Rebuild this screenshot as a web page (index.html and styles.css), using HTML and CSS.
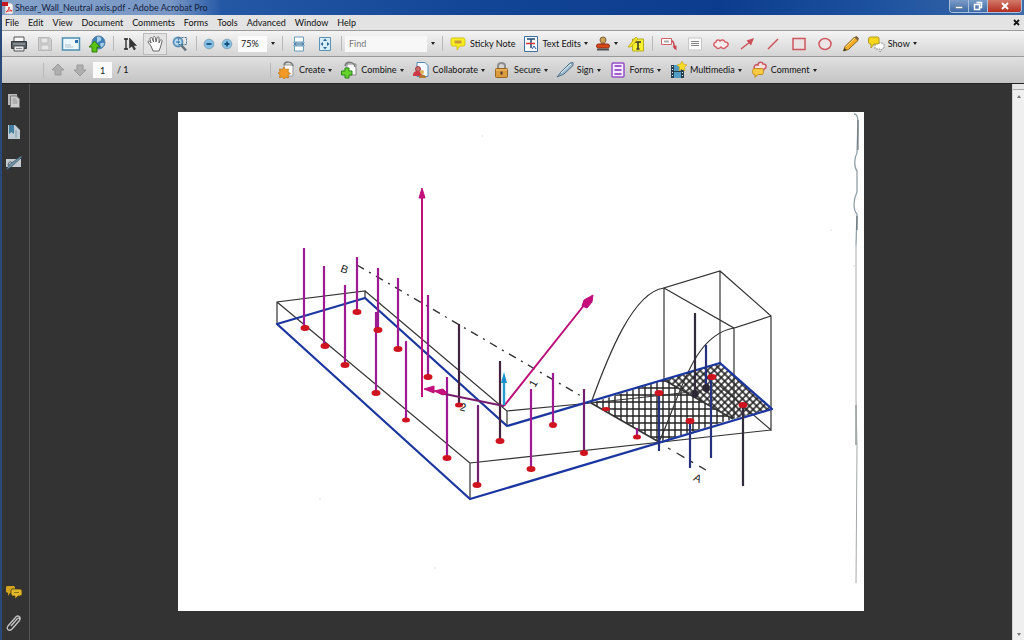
FILE: index.html
```html
<!DOCTYPE html>
<html lang="en">
<head>
  <meta charset="UTF-8">
  <meta name="viewport" content="width=device-width, initial-scale=1.0">
  <title>Shear_Wall_Neutral axis.pdf - Adobe Acrobat Pro</title>
  <link rel="stylesheet" href="styles.css">
</head>
<body>
  <header class="titlebar">
    <svg class="app-icon" width="12" height="12" viewBox="0 0 12 12"><path d="M3 1h6l2 2v9H3z" fill="#f6f3f3" stroke="#999" stroke-width=".6"/><path d="M0 0h6v4H0z" fill="#c8141c"/><path d="M4 10c2-1 3-3 3-5 0 2 1 3 3 4-2-.5-4 0-6 1z" fill="none" stroke="#d33"/></svg>
    <h1>Shear_Wall_Neutral axis.pdf - Adobe Acrobat Pro</h1>
    <div class="window-buttons">
      <button aria-label="Minimize"><svg width="10" height="10" viewBox="0 0 10 10"><path d="M1.500 5.500h7v2h-7z" fill="#fff" stroke="#456" stroke-width=".4"/></svg></button>
      <button aria-label="Restore"><svg width="10" height="10" viewBox="0 0 10 10"><path d="M3.500 1.500h5v5h-2M1.500 3.500h5v5h-5z" fill="none" stroke="#fff" stroke-width="1.500"/></svg></button>
      <button class="close" aria-label="Close"><svg width="10" height="10" viewBox="0 0 10 10"><path d="M2 2l6 6M8 2l-6 6" stroke="#fff" stroke-width="2"/></svg></button>
    </div>
  </header>

  <nav class="menubar">
    <a href="#">File</a>
    <a href="#">Edit</a>
    <a href="#">View</a>
    <a href="#">Document</a>
    <a href="#">Comments</a>
    <a href="#">Forms</a>
    <a href="#">Tools</a>
    <a href="#">Advanced</a>
    <a href="#">Window</a>
    <a href="#">Help</a>
    <button class="close-doc" aria-label="Close document"><svg width="7" height="7" viewBox="0 0 7 7"><path d="M1 1l5 5M6 1L1 6" stroke="#111" stroke-width="1.800"/></svg></button>
  </nav>

  <div class="toolbar main-tools">
    <button class="tool" aria-label="Print"><svg width="18" height="18" viewBox="0 0 18 18"><path d="M4 2h10v5H4z" fill="#f8f8f8" stroke="#555"/><path d="M1.500 6.500h15v7h-15z" fill="#5b6266" stroke="#33393c"/><path d="M3 9h12" stroke="#aeb6ba"/><path d="M4 11h10v5H4z" fill="#e8ecee" stroke="#555"/><path d="M6 13.500h6" stroke="#888"/></svg></button>
    <button class="tool" aria-label="Save" disabled><svg width="16" height="16" viewBox="0 0 16 16"><path d="M1.500 1.500h11l2 2v11h-13z" fill="#cfcfcf" stroke="#b5b5b5"/><path d="M4 2h7v5H4zM4 9h8v5H4z" fill="#e6e6e6" stroke="#bbb"/></svg></button>
    <button class="tool" aria-label="Email"><svg width="20" height="16" viewBox="0 0 20 16"><path d="M1.500 2h17v12h-17z" fill="#eef7fb" stroke="#4c8fb4" stroke-width="1.500"/><path d="M4 9h6M4 11h8" stroke="#a9c0cd"/><path d="M14 4h3v3h-3z" fill="#2a6fa8"/></svg></button>
    <button class="tool" aria-label="Upload"><svg width="18" height="18" viewBox="0 0 18 18"><circle cx="10.500" cy="7.500" r="6.500" fill="#3c7fb8" stroke="#5a83a3"/><path d="M9 2c3-1 5 1 4 3s-3 1-4 3M12 9c2-2 4-1 4 0s-2 4-3 3z" fill="#a7cfe5"/><path d="M6.500 6L12 12H9v5H4v-5H1z" fill="#5cc414" stroke="#2c7d0c"/></svg></button>
    <span class="sep"></span>
    <button class="tool" aria-label="Select"><svg width="16" height="16" viewBox="0 0 16 16"><path d="M2 3h4M4 3v10M2 13h4" stroke="#222" stroke-width="1.300" fill="none"/><path d="M7.500 2v10l2.500-2 2 4 1.500-1-2-3.500h3z" fill="#333" stroke="#222" stroke-width=".5"/></svg></button>
    <button class="tool active" aria-label="Hand"><svg width="18" height="18" viewBox="0 0 18 18"><path d="M5 11L2 7c0-2 2-1 3 1L4 4c0-2 2-2 2.500 0l1 3-.5-4c.3-2 2-2 2.500 0l.5 4L11 3c.5-2 2.500-1 2 .5V8l1-2.500c1-1.500 2.500-.5 2 1L14.500 12 13 16H7z" fill="#fff" stroke="#666"/></svg></button>
    <button class="tool" aria-label="Marquee zoom"><svg width="18" height="18" viewBox="0 0 18 18"><circle cx="7" cy="7" r="4.500" fill="#b5dcf2" stroke="#5b8fb3" stroke-width="1.800"/><path d="M10.500 10.500L15 15.500" stroke="#64717a" stroke-width="2.500"/><path d="M7.500 2.500h8v7h-8z" fill="none" stroke="#446f92" stroke-dasharray="2 1"/><path d="M5 7h4" stroke="#266999"/></svg></button>
    <span class="sep"></span>
    <button class="tool small" aria-label="Zoom out"><svg width="12" height="12" viewBox="0 0 12 12"><circle cx="6" cy="6" r="4.800" fill="#86c2e7" stroke="#82a4bb"/><path d="M3.500 6h5" stroke="#18507d" stroke-width="1.800"/></svg></button>
    <button class="tool small" aria-label="Zoom in"><svg width="12" height="12" viewBox="0 0 12 12"><circle cx="6" cy="6" r="4.800" fill="#86c2e7" stroke="#82a4bb"/><path d="M3.500 6h5M6 3.500v5" stroke="#18507d" stroke-width="1.800"/></svg></button>
    <input class="zoom-level" type="text" value="75%" aria-label="Zoom level">
    <button class="drop" aria-label="Zoom levels"><i class="caret"></i></button>
    <span class="sep"></span>
    <button class="tool" aria-label="Fit width"><svg width="14" height="16" viewBox="0 0 14 16"><path d="M2.500 1h9v5h-9zM2.500 10h9v5h-9z" fill="#fff" stroke="#6c9ebd"/><path d="M1 6.500h12M1 9.500h12" stroke="#8db5cc"/><path d="M2 8h10M4 6.500L2.500 8 4 9.500M10 6.500L11.500 8 10 9.500" fill="none" stroke="#28699a"/></svg></button>
    <button class="tool" aria-label="Fit page"><svg width="14" height="16" viewBox="0 0 14 16"><path d="M1.500 1.500h11v13h-11z" fill="#d9edf7" stroke="#5b94b7"/><path d="M7 2.500l2 2.500H5zM7 13.500L9 11H5zM2.500 8L5 6v4zM11.500 8L9 6v4z" fill="#28699a"/></svg></button>
    <span class="sep"></span>
    <input class="find" type="text" placeholder="Find" aria-label="Find">
    <button class="drop" aria-label="Find options"><i class="caret"></i></button>
    <span class="sep"></span>
    <button class="labeled"><svg width="18" height="16" viewBox="0 0 18 16"><path d="M3 2h11c2 0 2 1 2 4s0 4-2 4h-3l-3 4V10H4C2 10 2 9 2 6s0-4 1-4z" fill="#fbf01f" stroke="#d2c21c"/><path d="M5.500 4.500h7v3h-7z" fill="#c99a3c"/></svg>Sticky Note</button>
    <button class="labeled"><svg width="18" height="18" viewBox="0 0 18 18"><path d="M2.500 1.500h13v15h-13z" fill="#f7fbff" stroke="#3e6fa0"/><path d="M5 4h8M9 4v9" stroke="#234a75" stroke-width="1.500"/><path d="M4 8.500h9" stroke="#d33" stroke-width="1.500"/><path d="M10 14l2-3 2 3" fill="none" stroke="#2458b0"/></svg>Text Edits<i class="caret"></i></button>
    <button class="tool stamp" aria-label="Stamp"><svg width="16" height="16" viewBox="0 0 16 16"><circle cx="8" cy="4" r="3" fill="#c9a356" stroke="#7f633b"/><path d="M6 6h4v3H6z" fill="#a48148"/><rect x="1.500" y="8" width="13" height="4" rx="2" fill="#d84818" stroke="#902d16"/><path d="M2 13.500h12" stroke="#4f4f4f" stroke-width="2"/></svg><i class="caret"></i></button>
    <button class="tool" aria-label="Highlight text"><svg width="18" height="16" viewBox="0 0 18 16"><path d="M5.500 3h11v12h-11z" fill="#f8f22e" stroke="#b5ac25"/><path d="M8 6h6M11 6v7M9.500 13h3" stroke="#333" stroke-width="1.500"/><path d="M1 11L9 1l2 2-7 8z" fill="#f5e52a" stroke="#b6a419" stroke-width=".8"/></svg></button>
    <span class="sep"></span>
    <button class="tool" aria-label="Callout"><svg width="18" height="16" viewBox="0 0 18 16"><path d="M1.500 2.500h10v6h-10z" fill="#fff" stroke="#cf626a"/><path d="M4 4.500h5v2H4z" fill="#aaa"/><path d="M12 5c2 0 2 5 3 8" fill="none" stroke="#c9434c" stroke-width="1.500"/><path d="M12.500 10.500l4 4V9.500z" fill="#c9434c"/></svg></button>
    <button class="tool" aria-label="Text box"><svg width="16" height="14" viewBox="0 0 16 14"><path d="M1.500 1h13v12h-13z" fill="#fafafa" stroke="#c7c7c7"/><path d="M4 4.500h8M4 6.500h8M4 8.500h8" stroke="#888"/></svg></button>
    <button class="tool" aria-label="Cloud"><svg width="16" height="14" viewBox="0 0 16 14"><path d="M3 10C0 9 0 6 3 5c0-2 3-3 4-1 2-2 4-1 5 1 4 0 4 4 1 5-1 2-4 2-5 0-2 2-4 2-5 0z" fill="#f8eeee" stroke="#d46169" stroke-width="1.500"/></svg></button>
    <button class="tool" aria-label="Arrow"><svg width="16" height="14" viewBox="0 0 16 14"><path d="M2 12l9-7" stroke="#cc5059" stroke-width="1.500"/><path d="M7.500 3.500L15 1l-3 7.500z" fill="#cc5059"/></svg></button>
    <button class="tool" aria-label="Line"><svg width="14" height="14" viewBox="0 0 14 14"><path d="M2 12L12 2" stroke="#cc5059" stroke-width="1.500"/></svg></button>
    <button class="tool" aria-label="Rectangle"><svg width="14" height="14" viewBox="0 0 14 14"><path d="M1 1.500h12v11H1z" fill="#e9e3e3" stroke="#cf565f" stroke-width="1.500"/></svg></button>
    <button class="tool" aria-label="Oval"><svg width="14" height="14" viewBox="0 0 14 14"><ellipse cx="7" cy="7" rx="6" ry="5.500" fill="#eee6e6" stroke="#cf565f" stroke-width="1.500"/></svg></button>
    <button class="tool" aria-label="Pencil"><svg width="18" height="18" viewBox="0 0 18 18"><path d="M1.500 16L3 11.500 12.500 2 16 5.500 6.500 14.500z" fill="#f3aa27" stroke="#8b6726"/><path d="M4 12l9.500-9.500" stroke="#ffe07a"/><path d="M1.500 16l3-1-2-2z" fill="#333"/><path d="M12.500 2l3.500 3.500 1-2-2.500-2.500z" fill="#7c5d38"/></svg></button>
    <button class="labeled"><svg width="18" height="18" viewBox="0 0 18 18"><path d="M8 8h7l2 1v4l-2 1-2 3v-3H8z" fill="#fff" stroke="#888" stroke-dasharray="2 1"/><path d="M3 2h8l1 1v5l-1 1H7l-3 4V9H3L1.500 8V3z" fill="#f6d81a" stroke="#b29a28"/></svg>Show<i class="caret"></i></button>
  </div>

  <div class="toolbar task-tools">
    <div class="page-nav">
      <span class="sep"></span>
      <button class="tool page" aria-label="Previous page" disabled><svg width="14" height="14" viewBox="0 0 14 14"><path d="M7 1l6 6h-3v5H4V7H1z" fill="#aeaeae" stroke="#9c9c9c"/></svg></button>
      <button class="tool page" aria-label="Next page" disabled><svg width="14" height="14" viewBox="0 0 14 14"><path d="M7 13l6-6h-3V2H4v5H1z" fill="#aeaeae" stroke="#9c9c9c"/></svg></button>
      <input class="page-number" id="pageNumber" type="text" value="1">
      <label for="pageNumber">/ 1</label>
    </div>
    <span class="sep"></span>
    <button class="labeled"><svg width="18" height="18" viewBox="0 0 18 18"><path d="M6 4h9v11H6z" fill="#fafafa" stroke="#999"/><path d="M6 4c1-4 8-4 9 1" fill="none" stroke="#777" stroke-width="1.500"/><path d="M6 6l1.500 2.500 3-.5-.5 3 2.500 1.500L10 14l.5 3-3-.5L6 18l-1.500-2-3 .5L2 14l-2-2 2-1-.5-3 3 .5z" fill="#f29a25" stroke="#bf7014" stroke-width=".7"/></svg>Create<i class="caret"></i></button>
    <button class="labeled"><svg width="18" height="18" viewBox="0 0 18 18"><path d="M7 3h9v11H7z" fill="#fafafa" stroke="#888"/><path d="M5 5c1-5 9-5 10 1" fill="none" stroke="#777" stroke-width="1.500"/><path d="M5 7h4v3h3v4H9v3H5v-3H1.500v-4H5z" fill="#66d32c" stroke="#278515"/></svg>Combine<i class="caret"></i></button>
    <button class="labeled"><svg width="18" height="18" viewBox="0 0 18 18"><path d="M5 1.500h8l3 3v11H5z" fill="#f4faff" stroke="#4e8bb6"/><circle cx="6" cy="8" r="2.500" fill="#cd6c65" stroke="#97404c"/><path d="M1 15c0-5 3-5 5-5s4 2 4 5z" fill="#cc3946"/><circle cx="10" cy="11" r="2" fill="#e2b157"/><path d="M7 17c0-4 6-5 7 0z" fill="#b67933"/></svg>Collaborate<i class="caret"></i></button>
    <button class="labeled"><svg width="18" height="18" viewBox="0 0 18 18"><path d="M5 8V5c0-4 7-4 7 0v3" fill="none" stroke="#8f8f8f" stroke-width="2"/><rect x="2.500" y="7.500" width="12" height="9" rx="1" fill="#d99b3c" stroke="#9b6725"/><path d="M3 9h11" stroke="#f2c56e"/><path d="M8.500 10.500v3" stroke="#533" stroke-width="2"/></svg>Secure<i class="caret"></i></button>
    <button class="labeled"><svg width="18" height="18" viewBox="0 0 18 18"><path d="M1 16l4-5 9-9 3-.5v3L8 13z" fill="#9cbacd" stroke="#51718a"/><path d="M5 12l10-9" stroke="#e7f2f8"/></svg>Sign<i class="caret"></i></button>
    <button class="labeled"><svg width="18" height="18" viewBox="0 0 18 18"><rect x="3" y="2" width="12" height="14" rx="1" fill="#f5edff" stroke="#9550c6" stroke-width="1.500"/><path d="M5.500 5h7M5.500 9h7M5.500 13h7" stroke="#a05bd0" stroke-width="2"/></svg>Forms<i class="caret"></i></button>
    <button class="labeled"><svg width="18" height="18" viewBox="0 0 18 18"><path d="M2 4h13v13H2z" fill="#253d4c"/><path d="M5 4h7v6H5zM5 11h7v6H5z" fill="#529cc6"/><path d="M3.500 5v12M13.500 5v12" stroke="#e6eef3" stroke-dasharray="1 2"/><path d="M13 0l1.500 3L18 4l-2.500 2 .5 4-3-2-3 2 .5-4L8 4l3.500-1z" fill="#f9dc26" stroke="#c7a414" stroke-width=".6"/></svg>Multimedia<i class="caret"></i></button>
    <button class="labeled"><svg width="18" height="18" viewBox="0 0 18 18"><path d="M5 8C3 6 5 3 8 4c0-4 5-3 5-1 4 0 4 4 1 5 0 3-3 3-5 1" fill="#f6dfdf" stroke="#c9555e" stroke-width="1.500"/><path d="M4 7.500h8c2 0 2 6 0 6H8l-3 3v-3H4c-2 0-2-6 0-6z" fill="#f9c941" stroke="#bf8b20"/></svg>Comment<i class="caret"></i></button>
  </div>

  <div class="workspace">
    <aside class="side-panel">
      <button aria-label="Pages"><svg width="14" height="16" viewBox="0 0 14 16"><path d="M1 1h9v11H1z" fill="#b8b8b8"/><path d="M3.500 3h6l3 3v8.500h-9z" fill="#cdcdcd" stroke="#777"/><path d="M5.500 6h4M5.500 8h5M5.500 10h5" stroke="#929292"/></svg></button>
      <button aria-label="Bookmarks"><svg width="14" height="16" viewBox="0 0 14 16"><path d="M1 1h7l5 5v9H1z" fill="#bdcbd4"/><path d="M2 1h5v9L4.500 8 2 10z" fill="#427f9e"/><path d="M9 6v8" stroke="#8599a5"/></svg></button>
      <button aria-label="Signatures"><svg width="18" height="16" viewBox="0 0 18 16"><path d="M1 4h15v8H1z" fill="#c4cbd0"/><path d="M3 10c1-4 3-4 4-2" fill="none" stroke="#456"/><path d="M1 15L4 10 16 1l1 1L6 12z" fill="#7195ab" stroke="#344b5a" stroke-width=".7"/></svg></button>
      <button class="comments" aria-label="Comments"><svg width="18" height="14" viewBox="0 0 18 14"><path d="M2 1h7l1 1v5l-1 1H5l-2 3V8L1 7V2z" fill="#d0a31a"/><path d="M7 4h8l2 1v5l-2 1h-2l-3 3v-3H7L6 9V5z" fill="#e0b72a" stroke="#4a3c16" stroke-width=".8"/><path d="M9 7.500h5" stroke="#8c701c"/></svg></button>
      <button aria-label="Attachments"><svg width="16" height="18" viewBox="0 0 16 18"><path d="M5 12L11 5c2-2 4 0 2 2l-7 8c-3 3-6 0-4-3l7-8c3-4 7-1 4 3l-6 7" fill="none" stroke="#c5c5c5" stroke-width="1.300"/></svg></button>
    </aside>

    <main class="document">
      <article class="sheet">
        <svg viewBox="178 112 686 499" role="img" aria-label="Shear wall neutral axis">
          <defs>
            <pattern id="grid" width="6" height="7" patternUnits="userSpaceOnUse"><path d="M0 3h6M3 0v7" stroke="#222" stroke-width="1.400"/></pattern>
            <pattern id="cross" width="5" height="5" patternUnits="userSpaceOnUse" patternTransform="rotate(45)"><path d="M0 2h5M2 0v5" stroke="#1c1c1c" stroke-width="1.500"/></pattern>
          </defs>

          <!-- compression zone -->
          <path d="M591 403L664 380 733 419 659 442z" fill="url(#grid)"/>
          <path d="M664 380L720 363 771 409 733 419z" fill="url(#cross)"/>

          <!-- wall outline and stress block -->
          <g fill="none" stroke="#333" stroke-width="1.200">
            <path d="M277 324V302L365 291V298M277 302L470 463V499M470 463L771 430M365 291L507 411V426M507 411L591 403 700 391"/>
            <path d="M664 380V288L720 271 771 316V430L720 386M664 288L734 328 771 316M720 271V363M734 328V418"/>
            <path d="M591 403C608 356 633 292 664 288M659 442C680 397 692 335 734 328"/>
            <path d="M591 403L659 442M664 380L733 419" stroke-width="1.600"/>
          </g>
          <g fill="none" stroke="#333" stroke-width="1.400">
            <path d="M357 265L581 396" stroke-dasharray="8 6 2 6"/>
            <path d="M668 448L706 470" stroke-dasharray="3 7 9 7"/>
          </g>
          <path d="M277 324L365 298 507 426 720 363 772 409 470 499z" fill="none" stroke="#1c36a0" stroke-width="2.300" stroke-linejoin="round"/>

          <!-- tension bars -->
          <g fill="none" stroke="#9c1a92" stroke-width="2.200">
            <path d="M304 248V328M324 266V346M345 285V365M357 257V312M378 268V330M398 278V349M376 312V393M406 341V420M428 295V377M447 377V458M531 389V469M553 373V425M637 428V437"/>
            <path d="M478 405V485M584 389V453" stroke="#72206f"/>
            <path d="M459 324V405M500 361V441" stroke="#43243f"/>
          </g>
          <!-- compression bars -->
          <g stroke="#26327f" stroke-width="2.200">
            <path d="M659 393V451M690 421V468M711 377V458M706 345V388"/>
            <path d="M743 405V486M695 313V393" stroke="#332c3d"/>
          </g>
          <g fill="#cf1420">
            <ellipse cx="305" cy="328" rx="4.500" ry="3"/><ellipse cx="325" cy="346" rx="4.500" ry="3"/>
            <ellipse cx="345" cy="365" rx="4.500" ry="3"/><ellipse cx="357" cy="312" rx="4.500" ry="3"/>
            <ellipse cx="378" cy="330" rx="4.500" ry="3"/><ellipse cx="398" cy="349" rx="4.500" ry="3"/>
            <ellipse cx="376" cy="393" rx="4.500" ry="3"/><ellipse cx="406" cy="420" rx="4" ry="2.500"/>
            <ellipse cx="428" cy="377" rx="4.500" ry="3"/><ellipse cx="459" cy="405" rx="4" ry="2.500"/>
            <ellipse cx="447" cy="458" rx="4.500" ry="3"/><ellipse cx="477" cy="485" rx="4.500" ry="3"/>
            <ellipse cx="500" cy="441" rx="4.500" ry="3"/><ellipse cx="531" cy="469" rx="4.500" ry="3"/>
            <ellipse cx="553" cy="425" rx="4" ry="3"/><ellipse cx="584" cy="453" rx="4" ry="3"/>
            <ellipse cx="637" cy="437" rx="4" ry="2.500"/><ellipse cx="606" cy="409" rx="4" ry="2"/>
            <ellipse cx="659" cy="393" rx="4.500" ry="3"/><ellipse cx="690" cy="421" rx="4.500" ry="3"/>
            <ellipse cx="712" cy="377" rx="4.500" ry="3"/><ellipse cx="743" cy="405" rx="4.500" ry="3"/>
          </g>
          <g fill="#2c2733"><ellipse cx="695" cy="394" rx="3.500" ry="4"/><ellipse cx="706" cy="388" rx="3.500" ry="4"/></g>

          <!-- axes -->
          <g stroke="#bd117a" stroke-width="2" fill="#c60f7b">
            <path d="M422 397V194M504 406L585 304"/>
            <path d="M504 406L440 393" stroke="#7a1c6c"/>
            <path d="M422 188L425 198H419zM593 295L584 300 582 306 587 308 592 302zM424 389L434 386 434 393zM434 391L443 389 447 393 443 395z" stroke-width="1"/>
          </g>
          <path d="M504 405V380" stroke="#249cce" stroke-width="2.400"/>
          <path d="M504 372L507 383H501z" fill="#168fca"/>

          <g class="axis-labels">
            <text x="341" y="273" transform="rotate(20 345 269)">B</text>
            <text x="694" y="482" transform="rotate(25 698 478)">A</text>
            <text x="460" y="411" transform="rotate(12 463 407)">2</text>
            <text x="531" y="387" transform="rotate(-60 534 384)">1</text>
          </g>

          <!-- scanner edge -->
          <path d="M854 114Q858 114 858 122L857 153C854 158 854 167 857 171V192C853 200 853 210 857 214L856 245" fill="none" stroke="#91a0a7" stroke-width="1.300"/>
          <path d="M858 120V150M857 216V230M856 405V445" stroke="#596268"/>
          <path d="M856 245V400L857 445 856 583" fill="none" stroke="#a4a8aa"/>
          <path d="M481 136h2M830 230h2M853 266h2M319 499h2M434 568h2" stroke="#ddd"/>
        </svg>
      </article>
    </main>

    <div class="scrollbar">
      <span class="split-handle"></span>
      <button class="up" aria-label="Scroll up"></button>
      <button class="down" aria-label="Scroll down"></button>
    </div>
  </div>
</body>
</html>
```
FILE: styles.css
```css
* {
  margin: 0;
  padding: 0;
  box-sizing: border-box;
}

body {
  height: 100vh;
  display: flex;
  flex-direction: column;
  overflow: hidden;
  border-left: 2px solid #294a78;
  background: #333;
  color: #111;
  font: 9px/12px Lato, "Open Sans", sans-serif;
}

button,
input {
  border: none;
  background: none;
  color: inherit;
  font: inherit;
}

button {
  display: flex;
  align-items: center;
  justify-content: center;
  flex-shrink: 0;
}

svg {
  display: block;
  flex-shrink: 0;
}

.titlebar {
  height: 15px;
  display: flex;
  align-items: center;
  background: linear-gradient(90deg, #85a3ca 0, #7796c5 170px, #2458a5 220px, #134696 45%, #0c3c8d 70%, #1c519f 85%, #3c6aa9 100%);
}

.titlebar h1 {
  margin-left: 1px;
  font-size: 9px;
  font-weight: normal;
  color: #14223d;
}

.window-buttons {
  height: 13px;
  margin: 0 2px 2px auto;
  display: flex;
  border: 1px solid #a9bfda;
  border-top: none;
  border-radius: 0 0 4px 4px;
  overflow: hidden;
}

.window-buttons button {
  width: 19px;
  background: linear-gradient(#7b9cc8, #3e69a5);
  border-right: 1px solid #a9bfda;
}

.window-buttons .close {
  width: 33px;
  background: linear-gradient(#d37a6c, #b52e20);
  border-right: none;
}

.menubar {
  height: 15px;
  padding: 0 4px 0 3px;
  display: flex;
  align-items: center;
  gap: 9px;
  background: #e3e3e3;
}

.menubar a {
  color: #111;
  text-decoration: none;
}

.close-doc {
  margin-left: auto;
}

.toolbar {
  display: flex;
  align-items: center;
  border-top: 1px solid #999;
  white-space: nowrap;
}

.main-tools {
  height: 26px;
  padding-left: 4px;
  background: linear-gradient(#f4f4f4, #d4d4d4);
}

.task-tools {
  height: 27px;
  padding-left: 38px;
  background: linear-gradient(#e0e0e0, #c4c4c4);
}

.tool {
  width: 26px;
  height: 22px;
}

.tool.small {
  width: 18px;
}

.tool.page {
  width: 22px;
}

.tool.active {
  width: 24px;
  border: 1px solid #bbb;
  background: #e3e3e3;
}

.tool.stamp {
  width: 32px;
  gap: 3px;
}

.sep {
  width: 1px;
  height: 15px;
  margin: 0 3px;
  flex-shrink: 0;
  background: #b9b9b9;
}

.caret {
  border: 2px solid transparent;
  border-top: 3px solid #222;
  border-bottom: none;
}

.drop {
  width: 12px;
  height: 16px;
}

.labeled {
  height: 22px;
  padding: 0 4px;
  gap: 3px;
}

.main-tools .labeled {
  padding: 0 3px;
}

.zoom-level {
  width: 29px;
  height: 16px;
  margin-left: 2px;
  padding-left: 3px;
  background: #fbfbfb;
}

.find {
  width: 82px;
  height: 16px;
  padding-left: 4px;
  background: #f7f7f7;
}

.find::placeholder {
  color: #777;
  opacity: 1;
}

.page-nav {
  width: 227px;
  display: flex;
  align-items: center;
}

.page-number {
  width: 19px;
  height: 16px;
  margin: 0 5px 0 2px;
  background: #fbfbfb;
  text-align: center;
}

.workspace {
  flex: 1;
  min-height: 0;
  display: flex;
  border-top: 1px solid #222;
}

.side-panel {
  width: 28px;
  padding: 8px 6px 8px 2px;
  display: flex;
  flex-direction: column;
  align-items: center;
  gap: 13px;
  border-right: 1px solid #555;
}

.side-panel button {
  width: 18px;
  height: 18px;
}

.side-panel .comments {
  margin-top: auto;
}

.document {
  flex: 1;
  padding: 28px 148px 0;
  overflow: hidden;
  background: #333;
}

.sheet {
  background: #fff;
}

.axis-labels {
  fill: #222;
  font: 11px "Liberation Sans", sans-serif;
}

.scrollbar {
  width: 12px;
  display: flex;
  flex-direction: column;
  background: #efefef;
  border-left: 1px solid #d2d2d2;
}

.split-handle {
  height: 6px;
  background: #e6e6e6;
  border-bottom: 1px solid #aaa;
}

.scrollbar button {
  height: 12px;
}

.scrollbar button::before {
  content: "";
  border: 2px solid transparent;
}

.scrollbar .up::before {
  border-top: none;
  border-bottom: 3px solid #777;
}

.scrollbar .down {
  margin-top: auto;
}

.scrollbar .down::before {
  border-bottom: none;
  border-top: 3px solid #777;
}
```
